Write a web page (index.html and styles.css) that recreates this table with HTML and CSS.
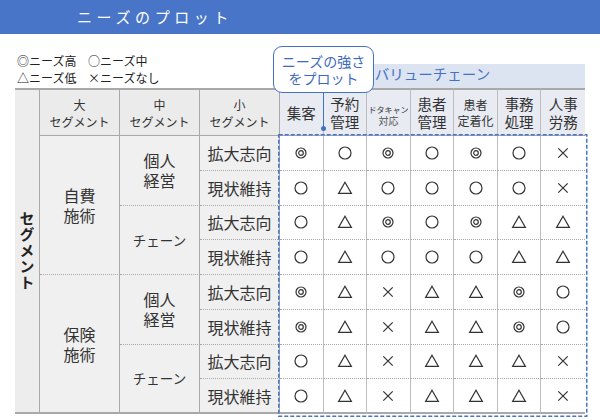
FILE: index.html
```html
<!DOCTYPE html>
<html lang="ja">
<head>
<meta charset="utf-8">
<title>ニーズのプロット</title>
<link rel="stylesheet" href="styles.css">
</head>
<body>
<svg class="defs" aria-hidden="true">
  <symbol id="d" viewBox="0 0 16 16"><circle cx="8" cy="8" r="5" fill="none" stroke="#333" stroke-width="1.2"/><circle cx="8" cy="8" r="2.3" fill="none" stroke="#333" stroke-width="1.2"/></symbol>
  <symbol id="o" viewBox="0 0 16 16"><circle cx="8" cy="8" r="6" fill="none" stroke="#333" stroke-width="1.2"/></symbol>
  <symbol id="t" viewBox="0 0 16 16"><polygon points="8,2.2 14.4,13.4 1.6,13.4" fill="none" stroke="#333" stroke-width="1.2" stroke-linejoin="miter"/></symbol>
  <symbol id="x" viewBox="0 0 16 16"><path d="M3.3 3.3 L12.7 12.7 M12.7 3.3 L3.3 12.7" fill="none" stroke="#333" stroke-width="1.2"/></symbol>
</svg>
<header class="title-bar"><h1 class="title">ニーズのプロット</h1></header>
<main class="main">
  <div class="callout">ニーズの強さ<br>をプロット</div>
  <div class="grid">
    <div class="legend">
      <span>◎ニーズ高</span><span>○ニーズ中</span>
      <span>△ニーズ低</span><span>×ニーズなし</span>
    </div>
    <div class="band">バリューチェーン</div>
    <div class="values">
      <svg class="frame" aria-hidden="true"><rect class="frame-rect"/></svg>
      <div class="v"><svg class="sym"><use href="#d"/></svg></div>
      <div class="v"><svg class="sym"><use href="#o"/></svg></div>
      <div class="v"><svg class="sym"><use href="#d"/></svg></div>
      <div class="v"><svg class="sym"><use href="#o"/></svg></div>
      <div class="v"><svg class="sym"><use href="#d"/></svg></div>
      <div class="v"><svg class="sym"><use href="#o"/></svg></div>
      <div class="v"><svg class="sym"><use href="#x"/></svg></div>

      <div class="v"><svg class="sym"><use href="#o"/></svg></div>
      <div class="v"><svg class="sym"><use href="#t"/></svg></div>
      <div class="v"><svg class="sym"><use href="#o"/></svg></div>
      <div class="v"><svg class="sym"><use href="#o"/></svg></div>
      <div class="v"><svg class="sym"><use href="#o"/></svg></div>
      <div class="v"><svg class="sym"><use href="#o"/></svg></div>
      <div class="v"><svg class="sym"><use href="#x"/></svg></div>

      <div class="v"><svg class="sym"><use href="#o"/></svg></div>
      <div class="v"><svg class="sym"><use href="#t"/></svg></div>
      <div class="v"><svg class="sym"><use href="#d"/></svg></div>
      <div class="v"><svg class="sym"><use href="#o"/></svg></div>
      <div class="v"><svg class="sym"><use href="#d"/></svg></div>
      <div class="v"><svg class="sym"><use href="#t"/></svg></div>
      <div class="v"><svg class="sym"><use href="#t"/></svg></div>

      <div class="v"><svg class="sym"><use href="#o"/></svg></div>
      <div class="v"><svg class="sym"><use href="#t"/></svg></div>
      <div class="v"><svg class="sym"><use href="#o"/></svg></div>
      <div class="v"><svg class="sym"><use href="#o"/></svg></div>
      <div class="v"><svg class="sym"><use href="#o"/></svg></div>
      <div class="v"><svg class="sym"><use href="#t"/></svg></div>
      <div class="v"><svg class="sym"><use href="#t"/></svg></div>

      <div class="v"><svg class="sym"><use href="#d"/></svg></div>
      <div class="v"><svg class="sym"><use href="#t"/></svg></div>
      <div class="v"><svg class="sym"><use href="#x"/></svg></div>
      <div class="v"><svg class="sym"><use href="#t"/></svg></div>
      <div class="v"><svg class="sym"><use href="#t"/></svg></div>
      <div class="v"><svg class="sym"><use href="#d"/></svg></div>
      <div class="v"><svg class="sym"><use href="#o"/></svg></div>

      <div class="v"><svg class="sym"><use href="#d"/></svg></div>
      <div class="v"><svg class="sym"><use href="#t"/></svg></div>
      <div class="v"><svg class="sym"><use href="#x"/></svg></div>
      <div class="v"><svg class="sym"><use href="#t"/></svg></div>
      <div class="v"><svg class="sym"><use href="#t"/></svg></div>
      <div class="v"><svg class="sym"><use href="#d"/></svg></div>
      <div class="v"><svg class="sym"><use href="#o"/></svg></div>

      <div class="v"><svg class="sym"><use href="#o"/></svg></div>
      <div class="v"><svg class="sym"><use href="#t"/></svg></div>
      <div class="v"><svg class="sym"><use href="#x"/></svg></div>
      <div class="v"><svg class="sym"><use href="#t"/></svg></div>
      <div class="v"><svg class="sym"><use href="#t"/></svg></div>
      <div class="v"><svg class="sym"><use href="#t"/></svg></div>
      <div class="v"><svg class="sym"><use href="#x"/></svg></div>

      <div class="v"><svg class="sym"><use href="#o"/></svg></div>
      <div class="v"><svg class="sym"><use href="#t"/></svg></div>
      <div class="v"><svg class="sym"><use href="#x"/></svg></div>
      <div class="v"><svg class="sym"><use href="#t"/></svg></div>
      <div class="v"><svg class="sym"><use href="#t"/></svg></div>
      <div class="v"><svg class="sym"><use href="#t"/></svg></div>
      <div class="v"><svg class="sym"><use href="#x"/></svg></div>
    </div>

    <div class="seg">セグメント</div>
    <div class="hcell"><span>大<br>セグメント</span></div>
    <div class="hcell"><span>中<br>セグメント</span></div>
    <div class="hcell"><span>小<br>セグメント</span></div>
    <div class="vh"><span>集客</span></div>
    <div class="vh"><span>予約<br>管理</span></div>
    <div class="vh"><span class="stack"><span class="tiny">ドタキャン</span><span class="small">対応</span></span></div>
    <div class="vh"><span>患者<br>管理</span></div>
    <div class="vh mid"><span>患者<br>定着化</span></div>
    <div class="vh"><span>事務<br>処理</span></div>
    <div class="vh end"><span>人事<br>労務</span></div>

    <div class="cell r4"><span>自費<br>施術</span></div>
    <div class="cell r2"><span>個人<br>経営</span></div>
    <div class="cell">拡大志向</div>
    <div class="cell">現状維持</div>
    <div class="cell r2 kana">チェーン</div>
    <div class="cell">拡大志向</div>
    <div class="cell">現状維持</div>

    <div class="cell r4 last"><span>保険<br>施術</span></div>
    <div class="cell r2"><span>個人<br>経営</span></div>
    <div class="cell">拡大志向</div>
    <div class="cell">現状維持</div>
    <div class="cell r2 kana last">チェーン</div>
    <div class="cell">拡大志向</div>
    <div class="cell last">現状維持</div>
  </div>
</main>
</body>
</html>
```

FILE: styles.css
```css
* {
  box-sizing: border-box;
  margin: 0;
  padding: 0;
}

body {
  width: 600px;
  height: 420px;
  overflow: hidden;
  background: #fff;
  color: #333;
  font-family: "Noto Sans CJK JP", "Noto Sans", sans-serif;
}

.defs {
  position: absolute;
  width: 0;
  height: 0;
  overflow: hidden;
}

.title-bar {
  height: 34px;
  background: #4875c8;
  padding-left: 77px;
}

.title {
  color: #fff;
  font-size: 15px;
  font-weight: normal;
  letter-spacing: 4.6px;
  line-height: 34px;
}

.main {
  position: relative;
  padding: 30px 15px 0;
}

.grid {
  display: grid;
  width: 570px;
  grid-template-columns: 25px 80px 80px 80px repeat(7, 1fr);
  grid-template-rows: 24px 48px repeat(8, 34.75px);
}

.legend {
  grid-column: 1 / 5;
  grid-row: 1;
  align-self: end;
  display: grid;
  grid-template-columns: 71px auto;
  padding-left: 2px;
  margin-bottom: 2px;
  font-size: 12px;
  line-height: 17px;
  color: #222;
}

.band {
  grid-column: 5 / 12;
  grid-row: 1;
  display: flex;
  align-items: center;
  justify-content: center;
  padding-bottom: 3px;
  background: #dce3f1;
  color: #4472c4;
  font-size: 14.5px;
  line-height: 1;
}

.values {
  position: relative;
  grid-column: 5 / 12;
  grid-row: 3 / 11;
  display: grid;
  grid-template-columns: repeat(7, 1fr);
  grid-template-rows: repeat(8, 1fr);
}

.frame {
  position: absolute;
  left: -2.5px;
  top: -2.5px;
  z-index: 1;
  width: calc(100% + 4.5px);
  height: calc(100% + 5px);
  overflow: visible;
  pointer-events: none;
}

.frame-rect {
  x: 0.75px;
  y: 0.75px;
  width: calc(100% - 1.5px);
  height: calc(100% - 1.5px);
  fill: none;
  stroke: #4a74c6;
  stroke-width: 1.5px;
  stroke-dasharray: 4 2;
}

.v {
  display: flex;
  align-items: center;
  justify-content: center;
  border-right: 1.5px solid #bdbdbd;
  border-bottom: 1px dotted #a8a8a8;
}

.v:nth-child(7n+1) {
  border-right: none;
}

.v:nth-last-child(-n+7) {
  border-bottom: 2px solid #a9a9a9;
}

.sym {
  display: block;
  width: 16px;
  height: 16px;
}

.seg {
  grid-row: span 9;
  display: flex;
  align-items: center;
  justify-content: center;
  writing-mode: vertical-rl;
  background: #ededed;
  border-top: 2px solid #a9a9a9;
  border-bottom: 2px solid #a9a9a9;
  border-right: 1.5px solid #a9a9a9;
  font-size: 15px;
  font-weight: bold;
  letter-spacing: 1px;
  color: #222;
}

.hcell {
  display: flex;
  align-items: center;
  justify-content: center;
  text-align: center;
  background: #ebebeb;
  border-top: 2px solid #a9a9a9;
  border-bottom: 1.5px solid #a9a9a9;
  border-right: 1.5px solid #a9a9a9;
  font-size: 12px;
  line-height: 17px;
}

.vh {
  display: flex;
  align-items: center;
  justify-content: center;
  text-align: center;
  background: #e8ebf2;
  border-top: 2px solid #a9a9a9;
  border-bottom: 1.5px solid #a9a9a9;
  border-right: 1.5px solid #bdbdbd;
  font-size: 14.5px;
  line-height: 17.5px;
}

.vh.end {
  border-right: none;
}

.vh.mid {
  font-size: 12px;
  line-height: 16px;
}

.stack {
  display: flex;
  flex-direction: column;
  align-items: center;
  padding-top: 6px;
}

.tiny {
  font-size: 8px;
  line-height: 11px;
  white-space: nowrap;
}

.small {
  font-size: 10px;
  line-height: 12px;
  color: #555;
}

.cell {
  display: flex;
  align-items: center;
  justify-content: center;
  text-align: center;
  background: #f0f0f0;
  border-right: 1.5px solid #a9a9a9;
  border-bottom: 1px dotted #a8a8a8;
  font-size: 16px;
  line-height: 20px;
}

.cell.kana {
  font-size: 13.5px;
}

.cell.last {
  border-bottom: 2px solid #a9a9a9;
}

.r2 {
  grid-row: span 2;
}

.r4 {
  grid-row: span 4;
}

.callout {
  position: absolute;
  left: 273px;
  top: 12px;
  z-index: 2;
  width: 101px;
  height: 47px;
  display: flex;
  align-items: center;
  justify-content: center;
  text-align: center;
  background: #fff;
  border: 1.5px solid #4472c4;
  border-radius: 9px;
  color: #3c6ac0;
  font-size: 14px;
  line-height: 17px;
}

.callout::after {
  content: "";
  position: absolute;
  left: 48.5px;
  top: 100%;
  width: 1.5px;
  height: 37px;
  background: #4472c4;
}

.callout::before {
  content: "";
  position: absolute;
  left: 46.7px;
  top: calc(100% + 34px);
  width: 5px;
  height: 5px;
  border-radius: 50%;
  background: #4472c4;
}
```
